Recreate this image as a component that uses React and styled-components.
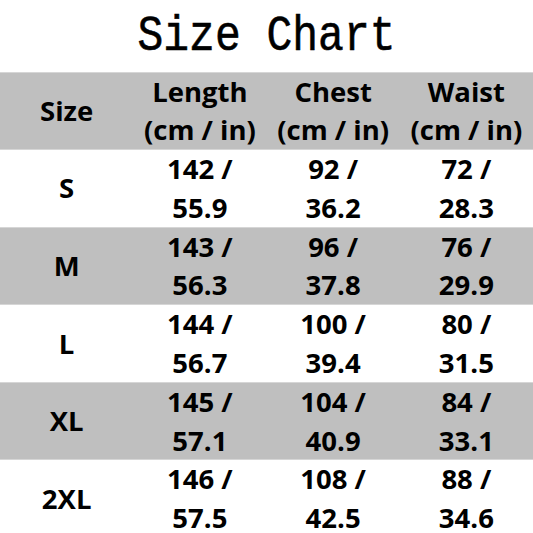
import React from "react";
import styled, { createGlobalStyle } from "styled-components";

const Global = createGlobalStyle`
  html, body { margin: 0; padding: 0; background: #fff; }
  body { width: 533px; height: 533px; overflow: hidden; }
`;

const Page = styled.div`
  width: 533px;
  height: 533px;
  display: flex;
  flex-direction: column;
  overflow: hidden;
`;

const Title = styled.h1`
  margin: 0;
  height: 71.5px;
  flex-shrink: 0;
  display: flex;
  align-items: center;
  justify-content: center;
  font-family: "Liberation Mono", monospace;
  font-weight: normal;
  font-size: 43px;
  color: #000;
  padding-top: 2px;
  box-sizing: border-box;
`;

const TitleText = styled.span`
  display: inline-block;
  transform: scaleY(1.16);
  -webkit-text-stroke: 0.5px #000;
`;

const Row = styled.div`
  display: grid;
  grid-template-columns: repeat(4, 1fr);
  height: 77.6px;
  flex-shrink: 0;
  background: ${(p) => (p.$shade ? "#bfbfbf" : "#ffffff")};
  border-top: 1px solid #d6d6d6;
  box-sizing: border-box;
`;

const Cell = styled.div`
  display: flex;
  flex-direction: column;
  align-items: center;
  justify-content: center;
  font-family: "Open Sans", "Noto Sans", sans-serif;
  font-weight: 700;
  font-size: 27.5px;
  line-height: 38.8px;
  color: #000;
  white-space: nowrap;
`;

const rows = [
  ["S", "142 /", "55.9", "92 /", "36.2", "72 /", "28.3"],
  ["M", "143 /", "56.3", "96 /", "37.8", "76 /", "29.9"],
  ["L", "144 /", "56.7", "100 /", "39.4", "80 /", "31.5"],
  ["XL", "145 /", "57.1", "104 /", "40.9", "84 /", "33.1"],
  ["2XL", "146 /", "57.5", "108 /", "42.5", "88 /", "34.6"],
];

export default function App() {
  return (
    <Page>
      <Global />
      <Title><TitleText>Size Chart</TitleText></Title>
      <Row $shade>
        <Cell>Size</Cell>
        <Cell><span>Length</span><span>(cm / in)</span></Cell>
        <Cell><span>Chest</span><span>(cm / in)</span></Cell>
        <Cell><span>Waist</span><span>(cm / in)</span></Cell>
      </Row>
      {rows.map((r, i) => (
        <Row key={r[0]} $shade={i % 2 === 1}>
          <Cell>{r[0]}</Cell>
          <Cell><span>{r[1]}</span><span>{r[2]}</span></Cell>
          <Cell><span>{r[3]}</span><span>{r[4]}</span></Cell>
          <Cell><span>{r[5]}</span><span>{r[6]}</span></Cell>
        </Row>
      ))}
    </Page>
  );
}
